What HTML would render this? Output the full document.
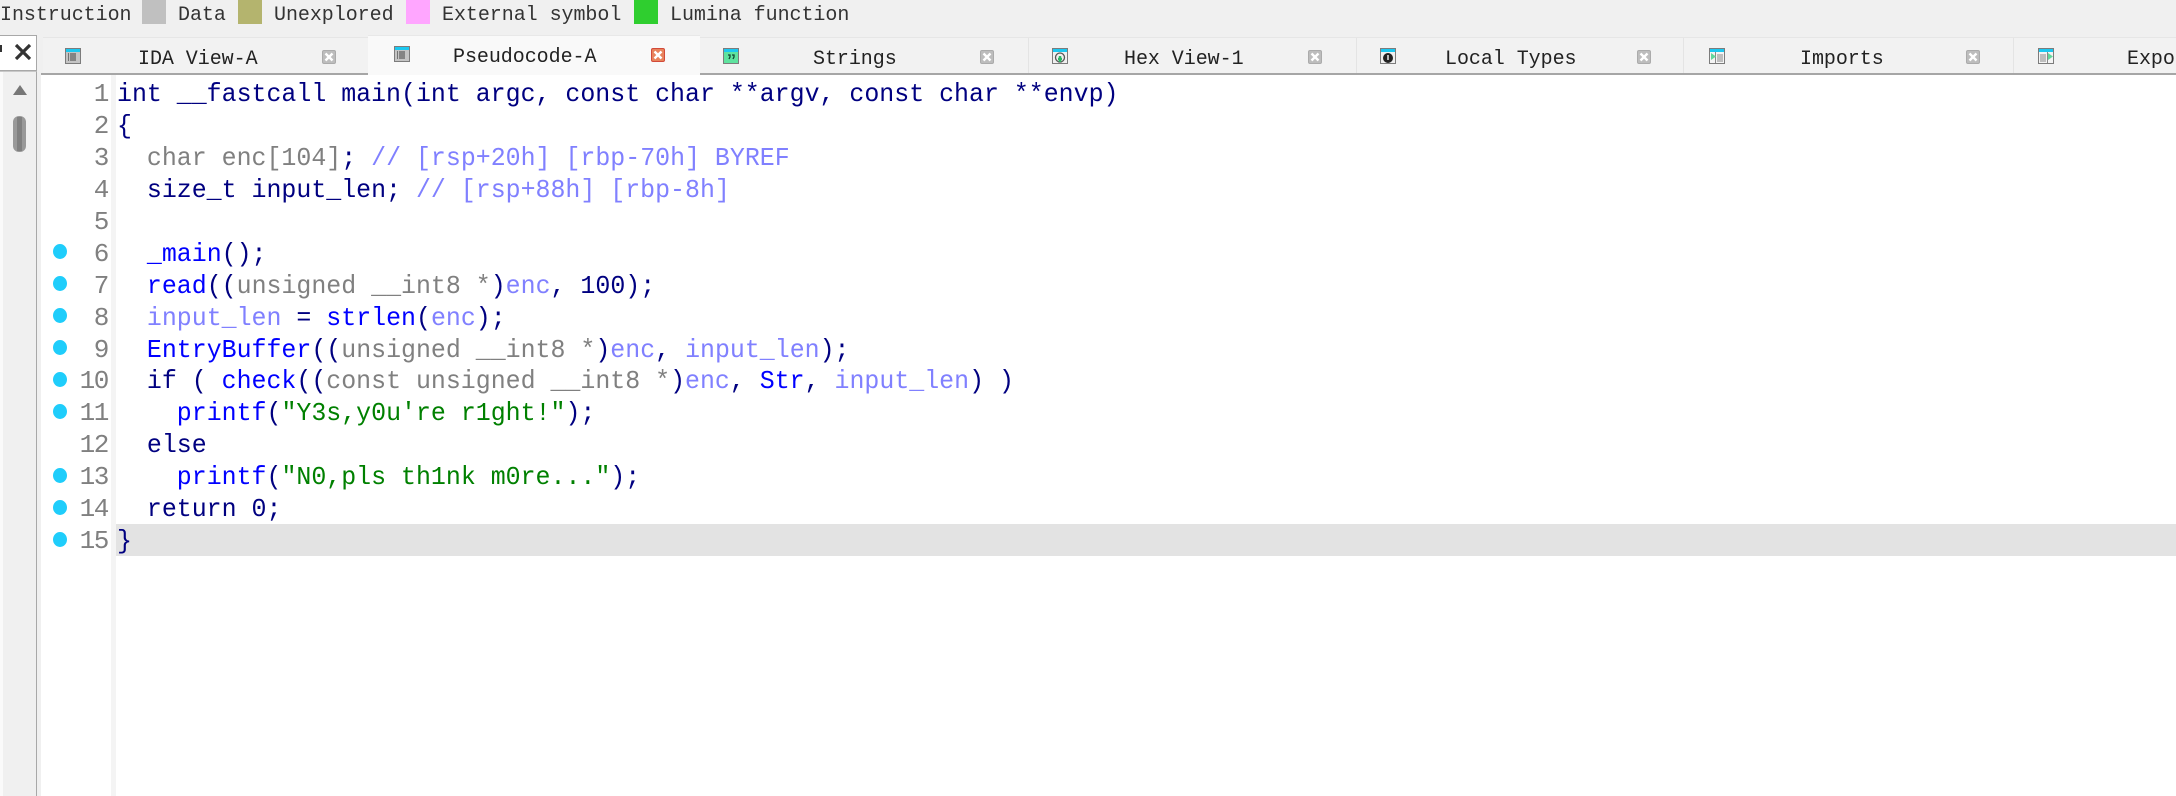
<!DOCTYPE html>
<html><head><meta charset="utf-8"><style>
html,body{margin:0;padding:0;background:#f0f0f0}
#p{position:relative;width:2176px;height:796px;overflow:hidden;background:#f0f0f0}
#p div,#p svg{position:absolute}
.lg{top:2px;font:20px/28px "Liberation Mono",monospace;color:#333;white-space:pre;letter-spacing:-.05px}
.sw{top:0;width:24px;height:24px}
.tt{font:20px/28px "Liberation Mono",monospace;color:#222;white-space:pre;letter-spacing:-.05px;top:46px}
.ln{left:117px;height:32px;font:26px/32px "Liberation Mono",monospace;white-space:pre;color:#000080;transform:scaleX(.958);transform-origin:0 0}
.no{left:60px;width:48px;text-align:right;height:32px;font:26px/32px "Liberation Mono",monospace;letter-spacing:-1.4px;color:#808080}
.dot{left:53px;width:14px;height:15px;border-radius:50%;background:#1fcdfb}
.b{color:#0000ff}.g{color:#808080}.l{color:#8080ff}.s{color:#008000}
.sep{top:38px;width:1px;height:35px;background:#e4e4e4}
</style></head><body><div id="p">

<div class="lg" style="left:0">Instruction</div>
<div class="sw" style="left:142px;background:#c0c0c0"></div>
<div class="lg" style="left:178px">Data</div>
<div class="sw" style="left:238px;background:#b4b46e"></div>
<div class="lg" style="left:274px">Unexplored</div>
<div class="sw" style="left:406px;background:#ffa6ff"></div>
<div class="lg" style="left:442px">External symbol</div>
<div class="sw" style="left:634px;background:#2fce2f"></div>
<div class="lg" style="left:670px">Lumina function</div>

<!-- left search box -->
<div style="left:-2px;top:35px;width:37px;height:34px;background:#fff;border:1px solid #a8a8a8"></div>
<div style="left:0;top:45px;width:2px;height:7px;background:#333"></div>
<svg style="left:15px;top:44px" width="16" height="16" viewBox="0 0 16 16"><path d="M1 1L15 15M15 1L1 15" stroke="#333" stroke-width="3.2" fill="none"/></svg>

<!-- sidebar -->
<div style="left:0;top:71px;width:36px;height:725px;background:#fafafa;border-right:1px solid #a8a8a8;border-top:1px solid #c8c8c8"></div>
<div style="left:3px;top:72px;width:33px;height:724px;background:#f0f0f0"></div>
<svg style="left:13px;top:85px" width="14" height="10" viewBox="0 0 14 10"><path d="M7 0L14 10H0Z" fill="#777"/></svg>
<div style="left:13px;top:116px;width:13px;height:36px;border-radius:6px;background:#999"></div>
<div style="left:17px;top:117px;width:5px;height:34px;background:#808080"></div>

<!-- tab bar -->
<div style="left:43px;top:37px;width:2133px;height:36px;background:#f2f2f2;border-top:1px solid #e6e6e6"></div>
<div style="left:41px;top:73px;width:2135px;height:2px;background:#a6a6a6"></div>
<div style="left:368px;top:35px;width:332px;height:40px;background:#f9f9f9;border-top:1px solid #e8e8e8;box-sizing:border-box"></div>
<div class="sep" style="left:1028px"></div>
<div class="sep" style="left:1356px"></div>
<div class="sep" style="left:1683px"></div>
<div class="sep" style="left:2013px"></div>

<!-- tab icons -->
<svg style="left:65px;top:48px" width="16" height="16" viewBox="0 0 16 16"><rect x=".5" y=".5" width="15" height="15" fill="#c4c4c4" stroke="#7c7c7c"/><rect x="1" y="1" width="14" height="3" fill="#1cc8f0"/><path d="M5 6h6M5 8h6M5 10h6M5 12h6" stroke="#444" stroke-width="1"/><path d="M3 6h1M3 8h1M3 10h1M3 12h1" stroke="#222"/></svg>
<svg style="left:394px;top:46px" width="16" height="16" viewBox="0 0 16 16"><rect x=".5" y=".5" width="15" height="15" fill="#c4c4c4" stroke="#7c7c7c"/><rect x="1" y="1" width="14" height="3" fill="#1cc8f0"/><path d="M5 6h6M5 8h6M5 10h6M5 12h6" stroke="#444" stroke-width="1"/><path d="M3 6h1M3 8h1M3 10h1M3 12h1" stroke="#222"/></svg>
<svg style="left:723px;top:48px" width="16" height="16" viewBox="0 0 16 16"><rect x=".5" y=".5" width="15" height="15" fill="#5fe39f" stroke="#7c7c7c"/><rect x="1" y="1" width="14" height="3" fill="#1cc8f0"/><path d="M5 7h2v2l-1 2M9 7h2v2l-1 2" stroke="#143" stroke-width="1.3" fill="none"/></svg>
<svg style="left:1052px;top:48px" width="16" height="16" viewBox="0 0 16 16"><rect x=".5" y=".5" width="15" height="15" fill="#f0f0f0" stroke="#7c7c7c"/><rect x="1" y="1" width="14" height="3" fill="#1cc8f0"/><circle cx="8" cy="9.5" r="4.500" fill="none" stroke="#555" stroke-width="1.3"/><path d="M8 8v6M6 11h4" stroke="#2cb865" stroke-width="2.4"/></svg>
<svg style="left:1380px;top:48px" width="16" height="16" viewBox="0 0 16 16"><rect x=".5" y=".5" width="15" height="15" fill="#f0f0f0" stroke="#7c7c7c"/><rect x="1" y="1" width="14" height="3" fill="#1cc8f0"/><ellipse cx="8" cy="10" rx="5" ry="5" fill="#222"/><path d="M8 7v5" stroke="#ddd" stroke-width="1.6"/></svg>
<svg style="left:1709px;top:48px" width="16" height="16" viewBox="0 0 16 16"><rect x=".5" y=".5" width="15" height="15" fill="#f4f4f4" stroke="#7c7c7c"/><rect x="1" y="1" width="14" height="3" fill="#1cc8f0"/><path d="M6.500 4v11M8 7h6M8 9h6M8 11h6M8 13h6" stroke="#888"/><path d="M2 5l5 3.500L2 12Z" fill="#62d79b"/></svg>
<svg style="left:2038px;top:48px" width="16" height="16" viewBox="0 0 16 16"><rect x=".5" y=".5" width="15" height="15" fill="#f4f4f4" stroke="#7c7c7c"/><rect x="1" y="1" width="14" height="3" fill="#1cc8f0"/><path d="M9.500 4v11M2 7h6M2 9h6M2 11h6M2 13h6" stroke="#888"/><path d="M10 5l5 3.500L10 12Z" fill="#62d79b"/></svg>

<!-- tab labels -->
<div class="tt" style="left:138px">IDA View-A</div>
<div class="tt" style="left:453px;top:44px">Pseudocode-A</div>
<div class="tt" style="left:813px">Strings</div>
<div class="tt" style="left:1124px">Hex View-1</div>
<div class="tt" style="left:1445px">Local Types</div>
<div class="tt" style="left:1800px">Imports</div>
<div class="tt" style="left:2127px">Exports</div>

<!-- close buttons -->
<svg style="left:322px;top:50px" width="14" height="14" viewBox="0 0 14 14"><rect x=".5" y=".5" width="13" height="13" rx="1.500" fill="#bdbdbd" stroke="#ababab"/><path d="M3.500 3.500l7 7M10.500 3.500l-7 7" stroke="#fff" stroke-width="2.400"/></svg>
<svg style="left:651px;top:48px" width="14" height="14" viewBox="0 0 14 14"><rect x=".5" y=".5" width="13" height="13" rx="1.500" fill="#e8835c" stroke="#d24a3a"/><path d="M3.500 3.500l7 7M10.500 3.500l-7 7" stroke="#fff" stroke-width="2.400"/></svg>
<svg style="left:980px;top:50px" width="14" height="14" viewBox="0 0 14 14"><rect x=".5" y=".5" width="13" height="13" rx="1.500" fill="#bdbdbd" stroke="#ababab"/><path d="M3.500 3.500l7 7M10.500 3.500l-7 7" stroke="#fff" stroke-width="2.400"/></svg>
<svg style="left:1308px;top:50px" width="14" height="14" viewBox="0 0 14 14"><rect x=".5" y=".5" width="13" height="13" rx="1.500" fill="#bdbdbd" stroke="#ababab"/><path d="M3.500 3.500l7 7M10.500 3.500l-7 7" stroke="#fff" stroke-width="2.400"/></svg>
<svg style="left:1637px;top:50px" width="14" height="14" viewBox="0 0 14 14"><rect x=".5" y=".5" width="13" height="13" rx="1.500" fill="#bdbdbd" stroke="#ababab"/><path d="M3.500 3.500l7 7M10.500 3.500l-7 7" stroke="#fff" stroke-width="2.400"/></svg>
<svg style="left:1966px;top:50px" width="14" height="14" viewBox="0 0 14 14"><rect x=".5" y=".5" width="13" height="13" rx="1.500" fill="#bdbdbd" stroke="#ababab"/><path d="M3.500 3.500l7 7M10.500 3.500l-7 7" stroke="#fff" stroke-width="2.400"/></svg>

<!-- code area -->
<div style="left:41px;top:75px;width:2135px;height:721px;background:#fff"></div>
<div style="left:111px;top:75px;width:5px;height:721px;background:#f4f4f4"></div>
<div style="left:116px;top:524px;width:2060px;height:32px;background:#e3e3e3"></div>

<div class="no" style="top:78px">1</div>
<div class="no" style="top:110px">2</div>
<div class="no" style="top:142px">3</div>
<div class="no" style="top:174px">4</div>
<div class="no" style="top:206px">5</div>
<div class="no" style="top:238px">6</div>
<div class="no" style="top:270px">7</div>
<div class="no" style="top:302px">8</div>
<div class="no" style="top:334px">9</div>
<div class="no" style="top:365px">10</div>
<div class="no" style="top:397px">11</div>
<div class="no" style="top:429px">12</div>
<div class="no" style="top:461px">13</div>
<div class="no" style="top:493px">14</div>
<div class="no" style="top:525px">15</div>

<div class="dot" style="top:244px"></div>
<div class="dot" style="top:276px"></div>
<div class="dot" style="top:308px"></div>
<div class="dot" style="top:340px"></div>
<div class="dot" style="top:372px"></div>
<div class="dot" style="top:404px"></div>
<div class="dot" style="top:468px"></div>
<div class="dot" style="top:500px"></div>
<div class="dot" style="top:532px"></div>

<div class="ln" style="top:78px">int __fastcall main(int argc, const char **argv, const char **envp)</div>
<div class="ln" style="top:110px">{</div>
<div class="ln" style="top:142px">  <span class="g">char enc[104]</span>; <span class="l">// [rsp+20h] [rbp-70h] BYREF</span></div>
<div class="ln" style="top:174px">  size_t input_len; <span class="l">// [rsp+88h] [rbp-8h]</span></div>
<div class="ln" style="top:238px">  <span class="b">_main</span>();</div>
<div class="ln" style="top:270px">  <span class="b">read</span>((<span class="g">unsigned __int8 *</span>)<span class="l">enc</span>, 100);</div>
<div class="ln" style="top:302px">  <span class="l">input_len</span> = <span class="b">strlen</span>(<span class="l">enc</span>);</div>
<div class="ln" style="top:334px">  <span class="b">EntryBuffer</span>((<span class="g">unsigned __int8 *</span>)<span class="l">enc</span>, <span class="l">input_len</span>);</div>
<div class="ln" style="top:365px">  if ( <span class="b">check</span>((<span class="g">const unsigned __int8 *</span>)<span class="l">enc</span>, <span class="b">Str</span>, <span class="l">input_len</span>) )</div>
<div class="ln" style="top:397px">    <span class="b">printf</span>(<span class="s">"Y3s,y0u're r1ght!"</span>);</div>
<div class="ln" style="top:429px">  else</div>
<div class="ln" style="top:461px">    <span class="b">printf</span>(<span class="s">"N0,pls th1nk m0re..."</span>);</div>
<div class="ln" style="top:493px">  return 0;</div>
<div class="ln" style="top:525px">}</div>

</div></body></html>
